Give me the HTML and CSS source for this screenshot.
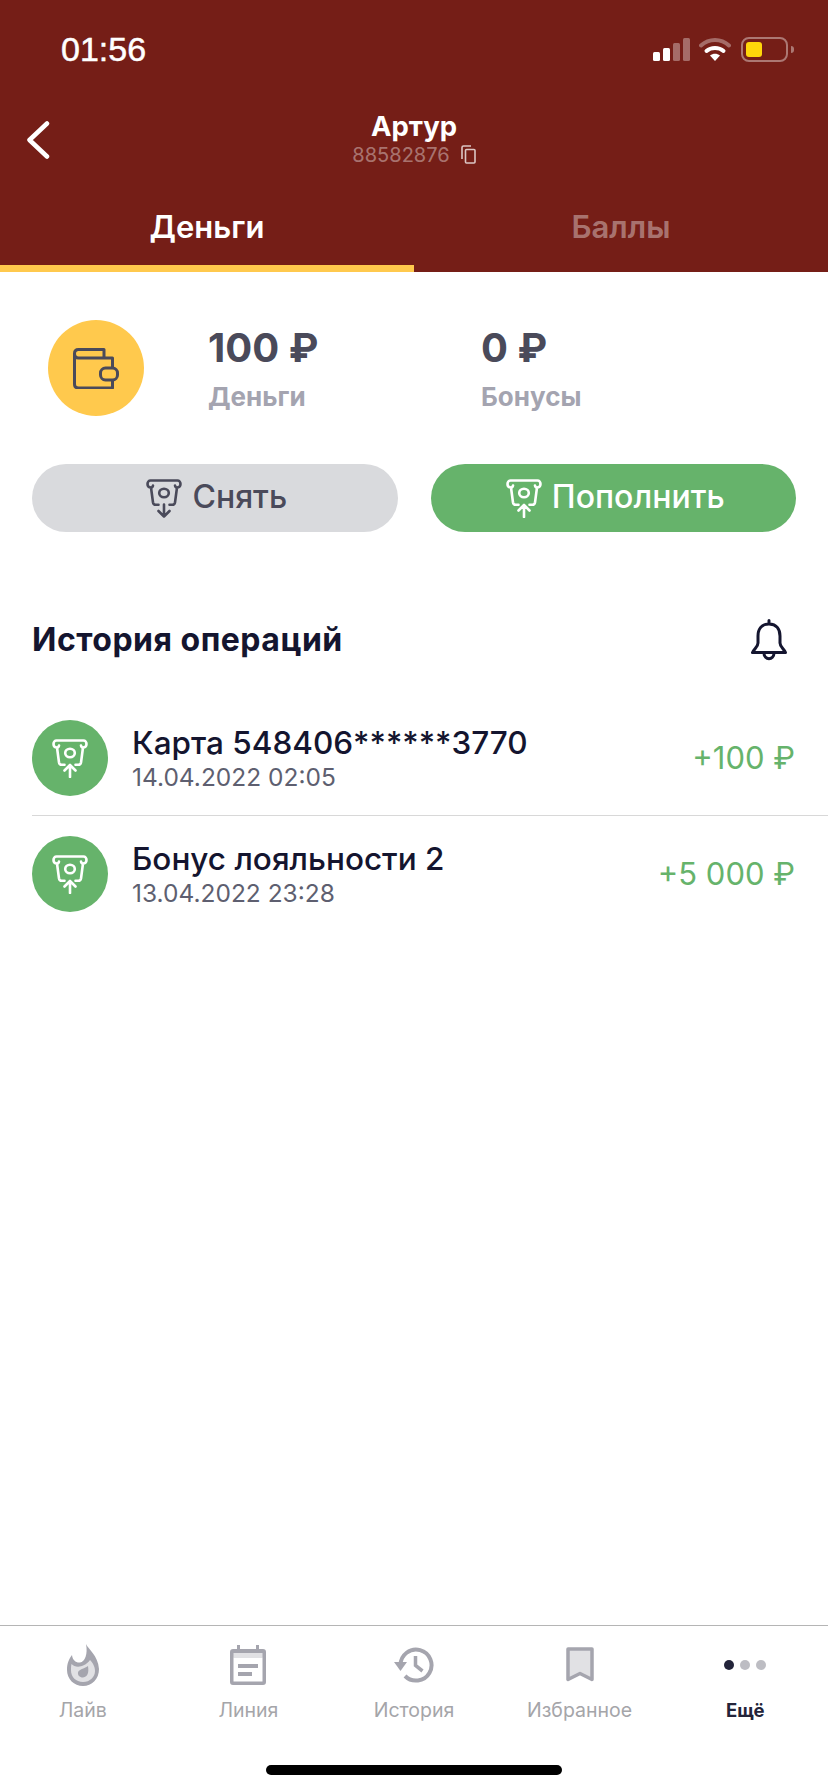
FILE: index.html
```html
<!DOCTYPE html>
<html lang="ru">
<head>
  <meta charset="UTF-8">
  <meta name="viewport" content="width=device-width, initial-scale=1.0">
  <title>Счёт</title>
  <link rel="stylesheet" href="styles.css">
</head>
<body>
  <svg class="icon-defs" width="0" height="0">
    <symbol id="atm-body" viewBox="0 0 36 39">
      <path d="M7 6.500C6.800 7.800 6 8.500 5 8.500C2.800 8.500 1.500 7 1.500 5S2.800 1.500 4.500 1.500H31.500C33.200 1.500 34.500 3 34.500 5S33.200 8.500 31 8.500C30 8.500 29.200 7.800 29 6.500M5 8.500L7 23.500C7.300 25 8.200 25.800 9.800 25.800H12.500M31 8.500L29 23.500C28.700 25 27.800 25.800 26.200 25.800H23.500" fill="none" stroke="currentColor" stroke-width="2.600" stroke-linecap="round" stroke-linejoin="round"/>
      <ellipse cx="18" cy="14" rx="4.800" ry="4.300" fill="none" stroke="currentColor" stroke-width="2.600"/>
    </symbol>
  </svg>

  <div class="page">
    <header class="header">
      <div class="status-bar">
        <span class="time">01:56</span>
        <div class="status-icons">
          <svg class="signal" width="37" height="23" viewBox="0 0 37 23">
            <rect x="0" y="14" width="7" height="9" rx="1.5" fill="#fff"/>
            <rect x="10" y="10" width="7" height="13" rx="1.5" fill="#fff"/>
            <rect x="20" y="5" width="7" height="18" rx="1.5" fill="#fff" opacity=".35"/>
            <rect x="30" y="0" width="7" height="23" rx="1.5" fill="#fff" opacity=".35"/>
          </svg>
          <svg class="wifi" width="32" height="24" viewBox="0 0 32 24">
            <path d="M2 8.500C10 1 22 1 30 8.500" fill="none" stroke="#fff" stroke-width="4" stroke-linecap="round" opacity=".35"/>
            <path d="M7.500 14C12 10 20 10 24.500 14" fill="none" stroke="#fff" stroke-width="4" stroke-linecap="round"/>
            <path d="M11 18.500C14 16 18 16 21 18.500L16 24Z" fill="#fff"/>
          </svg>
          <div class="battery"><div class="battery-fill"></div></div>
          <div class="battery-nub"></div>
        </div>
      </div>

      <div class="nav">
        <svg class="back" width="24" height="38" viewBox="0 0 24 38">
          <path d="M21 2.500L3.500 19L21 35.500" fill="none" stroke="#fff" stroke-width="4.500" stroke-linecap="round" stroke-linejoin="round"/>
        </svg>
        <div class="user">
          <div class="user-name">Артур</div>
          <div class="user-id">
            88582876
            <svg width="15" height="19" viewBox="0 0 15 19">
              <path d="M1 14V2.500C1 1.500 1.500 1 2.500 1H10" fill="none" stroke="#fff" stroke-width="1.600" opacity=".75"/>
              <rect x="4.500" y="4.500" width="9.500" height="13.500" rx="1" fill="none" stroke="#fff" stroke-width="1.600" opacity=".75"/>
            </svg>
          </div>
        </div>
      </div>

      <div class="tabs">
        <div class="tab tab-active">Деньги</div>
        <div class="tab">Баллы</div>
      </div>
    </header>

    <main class="main">
      <div class="summary">
        <div class="wallet">
          <svg width="46" height="41" viewBox="0 0 46 41">
            <path d="M39.500 20V10H5.500C3 10 1.500 8 1.500 5.500S3 1.500 5.500 1.500H31V10M1.500 5.500V36C1.500 38.500 3 40 5.500 40H39.500V32" fill="none" stroke="#4a4a5a" stroke-width="3" stroke-linejoin="round"/>
            <rect x="27.500" y="20" width="17" height="12" rx="5" fill="none" stroke="#4a4a5a" stroke-width="3"/>
          </svg>
        </div>
        <div class="balance">
          <div class="balance-value">100 ₽</div>
          <div class="balance-label">Деньги</div>
        </div>
        <div class="balance">
          <div class="balance-value">0 ₽</div>
          <div class="balance-label">Бонусы</div>
        </div>
      </div>

      <div class="actions">
        <button class="btn btn-gray">
          <svg class="atm" width="36" height="39" viewBox="0 0 36 39">
            <use href="#atm-body"/>
            <path d="M18 25.500V37.500M12.500 32L18 37.500L23.500 32" fill="none" stroke="currentColor" stroke-width="2.600" stroke-linecap="round" stroke-linejoin="round"/>
          </svg>
          <span class="btn-text">Снять</span>
        </button>
        <button class="btn btn-green">
          <svg class="atm" width="36" height="39" viewBox="0 0 36 39">
            <use href="#atm-body"/>
            <path d="M18 38V26M12.500 31.500L18 26L23.500 31.500" fill="none" stroke="currentColor" stroke-width="2.600" stroke-linecap="round" stroke-linejoin="round"/>
          </svg>
          <span class="btn-text">Пополнить</span>
        </button>
      </div>

      <div class="history-head">
        <div class="history-title">История операций</div>
        <svg width="40" height="42" viewBox="0 0 40 42">
          <path d="M20 1.500V5M20 5C12 5 9 11 9 17V24C9 28 5 30 3.500 33.500H36.500C35 30 31 28 31 24V17C31 11 28 5 20 5ZM15 34C15 41.500 25 41.500 25 34" fill="none" stroke="#14152f" stroke-width="3" stroke-linecap="round" stroke-linejoin="round"/>
        </svg>
      </div>

      <div class="history-list">
        <div class="row">
          <div class="row-icon">
            <svg class="atm" width="36" height="39" viewBox="0 0 36 39">
              <use href="#atm-body"/>
              <path d="M18 38V26M12.500 31.500L18 26L23.500 31.500" fill="none" stroke="currentColor" stroke-width="2.600" stroke-linecap="round" stroke-linejoin="round"/>
            </svg>
          </div>
          <div class="row-text">
            <div class="row-title">Карта 548406******3770</div>
            <div class="row-date">14.04.2022 02:05</div>
          </div>
          <div class="row-amount">+100 ₽</div>
        </div>
        <div class="row">
          <div class="row-icon">
            <svg class="atm" width="36" height="39" viewBox="0 0 36 39">
              <use href="#atm-body"/>
              <path d="M18 38V26M12.500 31.500L18 26L23.500 31.500" fill="none" stroke="currentColor" stroke-width="2.600" stroke-linecap="round" stroke-linejoin="round"/>
            </svg>
          </div>
          <div class="row-text">
            <div class="row-title">Бонус лояльности 2</div>
            <div class="row-date">13.04.2022 23:28</div>
          </div>
          <div class="row-amount">+5 000 ₽</div>
        </div>
      </div>
    </main>

    <footer class="tabbar">
      <nav class="tabbar-items">
        <div class="tabbar-item">
          <div class="tabbar-icon">
            <svg width="32" height="42" viewBox="0 0 32 42">
              <path d="M19 0C21 5 31 11 32 25C32 35 25 42 16 42S0 35 0 26C0 19 2 15 5 11C5.500 16 9 19 13 18.500C18 18 21 10 19 0Z" fill="#a5a5ae"/>
              <path d="M4.500 20C8 24 17 24 23 16C27 20 28 24 28 27C28 33 23 38 16 38S4 33 4 26.500C4 24 4 22 4.500 20Z" fill="#e1e1e4"/>
              <path d="M21 22C22 28 21 33 16 33.500C12.500 33.500 10.500 31 11 28.500C12 25 17 25 21 22Z" fill="#a5a5ae"/>
            </svg>
          </div>
          <div class="tabbar-label">Лайв</div>
        </div>
        <div class="tabbar-item">
          <div class="tabbar-icon">
            <svg width="36" height="40" viewBox="0 0 36 40">
              <path d="M7 0H10V4H26V0H29V4H33C35 4 36 5 36 7V37C36 39 35 40 33 40H3C1 40 0 39 0 37V7C0 5 1 4 3 4H7Z" fill="#a5a5ae"/>
              <rect x="3.500" y="8" width="29" height="4.500" fill="#e1e1e4"/>
              <rect x="3.500" y="12.500" width="29" height="24" fill="#fff"/>
              <rect x="8" y="19" width="20" height="4" fill="#a5a5ae"/>
              <rect x="8" y="27" width="14" height="4" fill="#a5a5ae"/>
            </svg>
          </div>
          <div class="tabbar-label">Линия</div>
        </div>
        <div class="tabbar-item">
          <div class="tabbar-icon">
            <svg width="40" height="36" viewBox="0 0 40 36">
              <path d="M6.500 18A15.500 15.500 0 1 1 11 29" fill="none" stroke="#a5a5ae" stroke-width="4"/>
              <path d="M0 15H13L6.500 24Z" fill="#a5a5ae"/>
              <path d="M21.500 9V18.500L28.500 24" fill="none" stroke="#a5a5ae" stroke-width="3.500"/>
            </svg>
          </div>
          <div class="tabbar-label">История</div>
        </div>
        <div class="tabbar-item">
          <div class="tabbar-icon">
            <svg width="28" height="36" viewBox="0 0 28 36">
              <path d="M2 2H26V32.500L14 26.500L2 32.500Z" fill="#e1e1e4" stroke="#a5a5ae" stroke-width="3.500" stroke-linejoin="round"/>
            </svg>
          </div>
          <div class="tabbar-label">Избранное</div>
        </div>
        <div class="tabbar-item">
          <div class="tabbar-icon">
            <div class="dots">
              <span class="dot dot-dark"></span>
              <span class="dot"></span>
              <span class="dot"></span>
            </div>
          </div>
          <div class="tabbar-label tabbar-label-active">Ещё</div>
        </div>
      </nav>
      <div class="home-indicator"></div>
    </footer>
  </div>
</body>
</html>
```

FILE: styles.css
```css
* {
  box-sizing: border-box;
}

body {
  margin: 0;
  font-family: Inter, 'Noto Sans', sans-serif;
  background-color: #fff;
  color: #14152f;
}

.icon-defs {
  display: block;
  height: 0;
}

.page {
  height: 1792px;
  display: flex;
  flex-direction: column;
  overflow: hidden;
}

/* header */
.header {
  background-color: #751e17;
  color: #fff;
}

.status-bar {
  height: 98px;
  display: flex;
  justify-content: space-between;
  align-items: center;
  padding: 0 34px 0 61px;
}

.time {
  font-family: 'Liberation Sans', sans-serif;
  font-size: 34px;
  font-weight: 500;
  -webkit-text-stroke: 0.5px #fff;
}

.status-icons {
  display: flex;
  align-items: center;
}

.wifi {
  margin-left: 9px;
}

.battery {
  width: 47px;
  height: 25px;
  margin-left: 10px;
  padding: 3px;
  border: 2px solid rgba(255,255,255,0.4);
  border-radius: 8px;
}

.battery-fill {
  width: 16px;
  height: 100%;
  background-color: #ffd60a;
  border-radius: 3px;
}

.battery-nub {
  width: 3px;
  height: 7px;
  margin-left: 3px;
  background-color: rgba(255,255,255,0.4);
  border-radius: 0 3px 3px 0;
}

.nav {
  height: 84px;
  position: relative;
  display: flex;
  justify-content: center;
  align-items: center;
}

.back {
  position: absolute;
  left: 26px;
  top: 23px;
}

.user {
  margin-bottom: 2px;
  text-align: center;
}

.user-name {
  font-size: 27.500px;
  font-weight: 700;
  line-height: 31px;
}

.user-id {
  display: flex;
  justify-content: center;
  align-items: center;
  gap: 11px;
  font-size: 20px;
  line-height: 26px;
  color: rgba(255,255,255,0.4);
}

.tabs {
  display: grid;
  grid-template-columns: 1fr 1fr;
  height: 90px;
}

.tab {
  display: flex;
  justify-content: center;
  align-items: center;
  padding-top: 6px;
  border-bottom: 7px solid transparent;
  font-size: 31px;
  font-weight: 600;
  color: rgba(255,255,255,0.4);
}

.tab-active {
  color: #fff;
  border-bottom-color: #ffc94d;
}

/* balance */
.main {
  flex: 1;
}

.summary {
  display: flex;
  align-items: center;
  padding: 48px 0 0 48px;
}

.wallet {
  width: 96px;
  height: 96px;
  flex-shrink: 0;
  margin-right: 64px;
  display: flex;
  justify-content: center;
  align-items: center;
  background-color: #ffc94d;
  border-radius: 50%;
}

.balance {
  width: 273px;
}

.balance-value {
  font-size: 40px;
  font-weight: 700;
  line-height: 50px;
  color: #4a4a5a;
}

.balance-label {
  margin-top: 8px;
  font-size: 26px;
  font-weight: 700;
  line-height: 32px;
  color: #a4a4b0;
}

.actions {
  display: grid;
  grid-template-columns: 1fr 1fr;
  gap: 33px;
  margin-top: 48px;
  padding: 0 32px;
}

.btn {
  height: 68px;
  display: flex;
  justify-content: center;
  align-items: center;
  gap: 10px;
  padding: 0 0 0 4px;
  border: none;
  border-radius: 34px;
  font-family: inherit;
  font-size: 32px;
  font-weight: 500;
}

.btn-text {
  margin-bottom: 3px;
}

.btn-gray {
  background-color: #d9dadd;
  color: #4a4a5a;
}

.btn-green {
  background-color: #66b36b;
  color: #fff;
}

.atm {
  flex-shrink: 0;
}

/* history */
.history-head {
  display: flex;
  justify-content: space-between;
  align-items: center;
  margin-top: 87px;
  padding: 0 39px 0 32px;
}

.history-title {
  font-size: 32px;
  font-weight: 700;
  letter-spacing: 0.5px;
  margin-bottom: 2px;
}

.history-list {
  margin: 39px 0 0 32px;
}

.row {
  display: flex;
  align-items: center;
  padding: 20px 33px 19px 0;
  border-bottom: 1px solid #d8d8d8;
}

.row:last-child {
  border-bottom: none;
}

.row-icon {
  width: 76px;
  height: 76px;
  flex-shrink: 0;
  margin-right: 24px;
  display: flex;
  justify-content: center;
  align-items: center;
  background-color: #66b36b;
  color: #fff;
  border-radius: 50%;
}

.row-text {
  flex: 1;
  margin-bottom: 2px;
}

.row-title {
  font-size: 31.500px;
  font-weight: 500;
  line-height: 40px;
}

.row-date {
  margin-top: -1px;
  font-size: 24.500px;
  line-height: 30px;
  color: #5e5f70;
}

.row-amount {
  margin-bottom: 2px;
  font-size: 31px;
  color: #66b36b;
}

/* bottom bar */
.tabbar {
  height: 167px;
  display: flex;
  flex-direction: column;
  border-top: 1px solid #b5b5b5;
}

.tabbar-items {
  display: grid;
  grid-template-columns: repeat(5, 1fr);
  padding-top: 18px;
}

.tabbar-item {
  display: flex;
  flex-direction: column;
  align-items: center;
}

.tabbar-icon {
  height: 42px;
  display: flex;
  align-items: center;
}

.tabbar-label {
  margin-top: 12px;
  font-size: 19.500px;
  line-height: 24px;
  color: #a5a5a9;
}

.tabbar-label-active {
  color: #23243a;
  font-size: 18.500px;
  font-weight: 700;
}

.dots {
  display: flex;
  gap: 6px;
}

.dot {
  width: 10px;
  height: 10px;
  background-color: #bdbdc3;
  border-radius: 50%;
}

.dot-dark {
  background-color: #23243a;
}

.home-indicator {
  width: 296px;
  height: 10px;
  margin: auto auto 17px;
  background-color: #000;
  border-radius: 5px;
}
```
